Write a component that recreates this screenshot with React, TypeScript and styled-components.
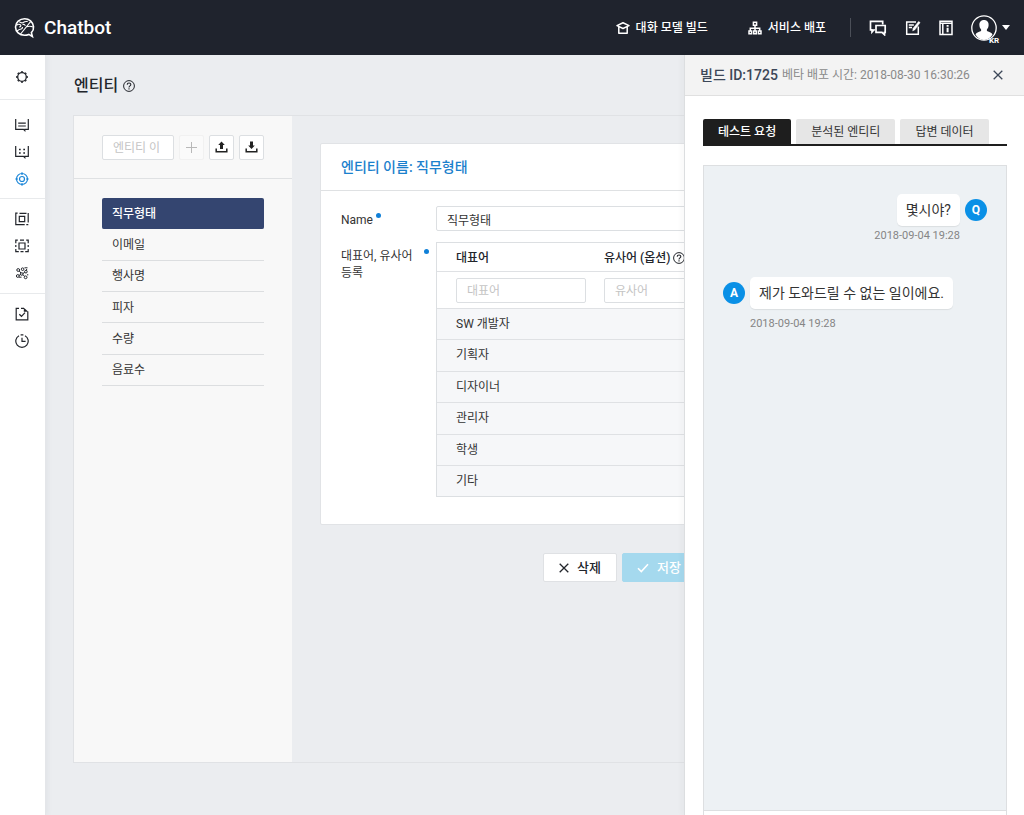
import React from "react";
import styled, { createGlobalStyle, css } from "styled-components";

const GlobalStyle = createGlobalStyle`
  *, *::before, *::after { box-sizing: border-box; }
  body {
    margin: 0;
    background: #ebedf0;
    color: #333;
    font-family: Roboto, "Noto Sans CJK KR", sans-serif;
    font-size: 12px;
    line-height: 17px;
  }
  button, input { font: inherit; color: inherit; margin: 0; }
  h1, h2, ul, p { margin: 0; padding: 0; }
  ul { list-style: none; }
  svg { display: block; }
`;

/* ---------- icons ---------- */

const Stroke = styled.svg.attrs<{ strokeWidth?: string | number }>((p) => ({
  fill: "none",
  stroke: "currentColor",
  strokeWidth: p.strokeWidth ?? 1.4,
  "aria-hidden": true,
}))`
  flex: none;
`;

const LogoIcon = () => (
  <Stroke width="22" height="22" viewBox="0 0 22 22" strokeWidth="1.6">
    <path d="M17.400 15.600c1.600-1.700 2.400-3.700 2.100-6C18.900 5 15.200 1.700 10.600 1.700 5.700 1.700 1.500 5.500 1.500 10.100c0 4.700 4 8.200 9 8.200 1.600 0 3-.3 4.300-.9l3.600 2.100-1-3.900Z" />
    <path d="M6.600 17 16.600 4.600M3 14.200c1.200-1 1.700-1.900 3.300-2 1.600 0 2.200-1 2.200-2.200M2.600 8.300c1.500-1.400 3.100-1.300 3.900-.4.900 1-.1 2.300-1.300 1.900M5.200 4.600c1.800 1.600 3.200 1.500 4.500.6 1.200-.8 2.500-.5 4-.8M8.500 7.600c1.300-.5 2.500 0 2.800 1.300M12.600 9.800c2.400-.8 4.600-.6 6.300.2" strokeWidth="1.100" />
  </Stroke>
);
const CapIcon = () => (
  <Stroke width="14" height="14" viewBox="0 0 14 14" strokeWidth="1.5">
    <path d="M1 4.600 7 1.700l6 2.900L7 7.500 1 4.600ZM2.800 6v6.200h8.400V6" strokeLinejoin="round" />
  </Stroke>
);
const TreeIcon = () => (
  <Stroke width="14" height="14" viewBox="0 0 14 14" strokeWidth="1.5">
    <path d="M5.400 1.200h3.200v3H5.400zM1 10h2.600v2.800H1zM5.700 10h2.600v2.800H5.700zM10.400 10H13v2.800h-2.600zM7 4.200V10M2.300 10V7.200h9.400V10" />
  </Stroke>
);
const TalkIcon = () => (
  <Stroke width="18" height="16" viewBox="0 0 18 16" strokeWidth="1.700">
    <path d="M5.800 9.800H5l-2 2.200V9.800H1.500V1.300h12.200v3.200" />
    <path d="M7 5.500h9.200v6.800h-.7v2.400l-2.500-2.400H7z" />
  </Stroke>
);
const NoteIcon = () => (
  <Stroke width="16" height="16" viewBox="0 0 16 16" strokeWidth="1.500">
    <path d="M11 2H1.700v12.200h11.600V6.500" />
    <path d="M3.800 5h5M3.800 7.500h3.200" />
    <path d="m13.600 1.500 1.500 1.100-5 7-2.400 1.300.5-2.700z" fill="currentColor" strokeWidth=".5" />
  </Stroke>
);
const GuideIcon = () => (
  <Stroke width="14" height="16" viewBox="0 0 14 16" strokeWidth="1.500">
    <path d="M1 1.200h12v13.400H1zM3.800 3v11.600M1 3.300h12" />
    <path d="M8.600 5v1.800M8.600 7.800v4.400" strokeWidth="2" />
  </Stroke>
);
const AvatarIcon = () => (
  <Stroke width="26" height="26" viewBox="0 0 26 26" strokeWidth="1.300">
    <circle cx="13" cy="13" r="12.200" />
    <path d="M13 5c3 0 4.800 2.100 4.600 5.200-.1 1.800-.7 3.200-1.700 4.200v1.700c2.800 1 4.800 1.700 5.600 3.500C19.600 23 16.500 25 13 25s-6.600-2-8.500-5.400c.8-1.800 2.800-2.500 5.600-3.500v-1.700c-1-1-1.600-2.400-1.700-4.200C8.200 7.100 10 5 13 5Z" fill="currentColor" stroke="none" />
  </Stroke>
);
const CaretIcon = () => (
  <svg width="8" height="5" viewBox="0 0 8 5" fill="currentColor" aria-hidden="true"><path d="M0 0h8L4 5z" /></svg>
);
const HelpIcon = () => (
  <Stroke width="12" height="12" viewBox="0 0 12 12" strokeWidth="1">
    <circle cx="6" cy="6" r="5.400" />
    <path d="M4.200 4.800C4.200 2.300 7.800 2.400 7.800 4.600 7.800 5.900 6 5.900 6 7.400M6 8.300v1.200" strokeWidth="1.100" />
  </Stroke>
);
const CloseIcon = () => (
  <Stroke width="10" height="10" viewBox="0 0 10 10" strokeWidth="1.300"><path d="m.7.7 8.600 8.600M9.300.7.7 9.300" /></Stroke>
);
const CheckIcon = () => (
  <Stroke width="12" height="10" viewBox="0 0 12 10" strokeWidth="1.600"><path d="m1 5.200 3.300 3.300L11 1.200" /></Stroke>
);
const PlusIcon = () => (
  <Stroke width="11" height="11" viewBox="0 0 11 11" strokeWidth="1"><path d="M5.500 0v11M0 5.500h11" /></Stroke>
);
const UploadIcon = () => (
  <Stroke width="13" height="12" viewBox="0 0 13 12" strokeWidth="1.500">
    <path d="M1.200 7.500v3.200h10.600V7.500" />
    <path d="M6.500.6 9.800 4H8v4H5V4H3.200z" fill="currentColor" stroke="none" />
  </Stroke>
);
const DownloadIcon = () => (
  <Stroke width="13" height="12" viewBox="0 0 13 12" strokeWidth="1.500">
    <path d="M1.200 7.500v3.200h10.600V7.500" />
    <path d="M6.500 8 9.800 4.600H8v-4H5v4H3.200z" fill="currentColor" stroke="none" />
  </Stroke>
);
const GearIcon = () => (
  <Stroke width="14" height="14" viewBox="0 0 14 14" strokeWidth="1.300">
    <circle cx="7" cy="7" r="4.300" />
    <path d="M7 1.200v1.300M7 11.500v1.300M1.200 7h1.300M11.500 7h1.300M2.900 2.900l.9.900M10.200 10.200l.9.900M11.100 2.900l-.9.900M3.800 10.200l-.9.900" strokeWidth="2" />
  </Stroke>
);
const IntentIcon = () => (
  <Stroke width="14" height="14" viewBox="0 0 14 14" strokeWidth="1.200">
    <path d="M.7 1v10.300h7.800l1.300 1.300v-1.300h3.500V1M3.200 5.200h7.600M3.200 8h7.600" />
  </Stroke>
);
const DialogIcon = () => (
  <Stroke width="14" height="14" viewBox="0 0 14 14" strokeWidth="1.200">
    <path d="M.7 1v10.300h7.800l1.300 1.300v-1.300h3.500V1" />
    <path d="M4 4.500h1.700M8.300 4.500H10M4 8h1.700M8.300 8H10" strokeWidth="1.700" />
  </Stroke>
);
const TargetIcon = () => (
  <Stroke width="14" height="14" viewBox="0 0 14 14" strokeWidth="1.200">
    <circle cx="7" cy="7" r="5.500" />
    <circle cx="7" cy="7" r="2.500" />
    <path d="M7 .3v2.700M7 11v2.700M.3 7H3M11 7h2.700" />
  </Stroke>
);
const FrameIcon = () => (
  <Stroke width="14" height="14" viewBox="0 0 14 14" strokeWidth="1.200">
    <path d="M2.600 1.200H.8v11.500h8.900M4.500 1.300h7M13.200 1v9.500M11.300 12.600h2M4.300 4.300h5.400v5.400H4.300z" />
  </Stroke>
);
const ScanIcon = () => (
  <Stroke width="14" height="14" viewBox="0 0 14 14" strokeWidth="1.200">
    <path d="M2.800 1.200H.8v3M.8 6v2M5 1.200h4M11.200 1.200h2v3M13.200 6v2M.8 10v2.700h3M5.500 12.700h3M10.200 12.700h3V10M4 4h6v6H4z" />
  </Stroke>
);
const LinksIcon = () => (
  <Stroke width="14" height="14" viewBox="0 0 14 14" strokeWidth="1">
    <circle cx="3.200" cy="4" r="1.400" /><circle cx="7.600" cy="3.200" r="1.300" /><circle cx="2.800" cy="10" r="1.400" />
    <circle cx="10.900" cy="5.700" r="1.300" /><circle cx="6.800" cy="8" r="1.300" /><circle cx="10.600" cy="11.300" r="1.400" />
    <path d="M4.300 5 5.900 7M4 9.400l1.600-.8M8 8.800l1.500 1.500M9.800 6.400 8 7.400M9.500 1.800h3M11.600 3v1.400M4 11.200h2.500M12 8.800h1.300" />
  </Stroke>
);
const ReportIcon = () => (
  <Stroke width="14" height="14" viewBox="0 0 14 14" strokeWidth="1.200">
    <path d="M4 1.300H1.200v11.500h11.600V4.500" />
    <path d="M6 1.300h3M4.300 7.200l2.200 2.100 3.500-3.600" />
    <path d="M8.800.7v4h4.600z" fill="currentColor" stroke="none" />
  </Stroke>
);
const ClockIcon = () => (
  <Stroke width="14" height="14" viewBox="0 0 14 14" strokeWidth="1.200">
    <path d="M4 1.700A6.200 6.200 0 1 0 10 1.700M7 3.800v3.600h3.600M5.600.9h2.800" />
  </Stroke>
);

/* ---------- shared parts ---------- */

const bareButton = css`
  display: flex;
  align-items: center;
  justify-content: center;
  padding: 0;
  border: 0;
  background: none;
  cursor: pointer;
`;

const IconButton = styled.button`${bareButton}`;

const TextInput = styled.input`
  height: 25px;
  padding: 1px 10px 0;
  border: 1px solid #dcdfe2;
  border-radius: 2px;
  background: #fff;
  min-width: 0;
  &::placeholder { color: #c4c4c4; opacity: 1; }
`;

/* ---------- page frame ---------- */

const Page = styled.div`
  position: relative;
  display: flex;
  flex-direction: column;
  min-height: 100vh;
  overflow: hidden;
`;

const TopBar = styled.header`
  display: flex;
  align-items: center;
  height: 55px;
  padding: 0 14px;
  background: #1f232d;
  color: #fff;
`;

const Brand = styled.a`
  display: flex;
  align-items: center;
  gap: 8px;
  margin-right: auto;
  color: #fff;
  font-size: 19px;
  font-weight: 500;
  line-height: 24px;
  text-decoration: none;
`;

const TopNav = styled.nav`
  display: flex;
  gap: 40px;
  padding-right: 24px;
  border-right: 1px solid #4b4f58;
`;

const TopLink = styled.a`
  display: flex;
  align-items: center;
  gap: 6px;
  color: #fff;
  font-weight: 500;
  text-decoration: none;
`;

const TopLinkText = styled.span`
  padding-top: 2px;
`;

const TopTools = styled.div`
  display: flex;
  align-items: center;
  gap: 18px;
  padding-left: 18px;
`;

const Account = styled.button`
  ${bareButton}
  position: relative;
  gap: 5px;
`;

const Locale = styled.span`
  position: absolute;
  left: 18px;
  bottom: -4px;
  font-size: 8px;
  font-weight: 700;
  line-height: 8px;
`;

const Body = styled.div`
  display: flex;
  flex: 1;
`;

const SideNav = styled.nav`
  width: 46px;
  flex: none;
  background: #fff;
  border-right: 1px solid #e4e6e9;
  box-shadow: 1px 0 6px rgba(40, 50, 70, 0.06);
`;

const SideGroup = styled.div<{ $top?: number; $bottom?: number }>`
  padding: ${(p) => p.$top ?? 6}px 2px ${(p) => p.$bottom ?? 7}px 0;
  border-bottom: 1px solid #e8eaec;
  &:last-child { border-bottom: 0; }
`;

const SideLink = styled.a<{ $active?: boolean }>`
  display: flex;
  align-items: center;
  justify-content: center;
  height: 27px;
  color: ${(p) => (p.$active ? "#1b86d8" : "#22252b")};
`;

const Main = styled.main`
  display: flex;
  flex: 1;
  flex-direction: column;
  min-width: 0;
  padding: 0 76px 52px 27px;
`;

const PageTitle = styled.h1`
  display: flex;
  align-items: center;
  gap: 5px;
  height: 60px;
  padding: 2px 0 0 1px;
  font-size: 16px;
  font-weight: 500;
  line-height: 24px;
  color: #22252b;
`;

const Workspace = styled.div`
  display: flex;
  flex: 1;
  border: 1px solid #e0e2e5;
`;

/* ---------- entity list ---------- */

const EntityPanel = styled.section`
  width: 218px;
  flex: none;
  background: #f8f8f8;
`;

const EntityTools = styled.form`
  display: flex;
  align-items: center;
  gap: 5px;
  height: 63px;
  padding: 0 28px;
  border-bottom: 1px solid #dfe1e3;
  ${TextInput} { flex: 1; }
`;

const ToolButton = styled.button`
  ${bareButton}
  width: 25px;
  height: 25px;
  flex: none;
  border: 1px solid #dcdfe2;
  border-radius: 2px;
  background: #fff;
  color: #222;
  &:disabled { border-color: #f1f1f1; background: #fafafa; color: #b8b8b8; cursor: default; }
`;

const EntityList = styled.ul`
  display: flex;
  flex-direction: column;
  height: 188px;
  margin: 19px 28px;
`;

const EntityItem = styled.li<{ $active?: boolean }>`
  display: flex;
  flex: 1;
  border-bottom: 1px solid #dcdee0;
  ${(p) => p.$active && css`
    border-color: #344570;
    border-radius: 2px;
    background: #344570;
    color: #fff;
    font-weight: 500;
  `}
`;

const EntityButton = styled.button`
  ${bareButton}
  flex: 1;
  justify-content: flex-start;
  padding: 2px 10px 0;
`;

/* ---------- entity editor ---------- */

const Editor = styled.section`
  flex: 1;
  min-width: 0;
  padding: 27px 28px;
`;

const Card = styled.div`
  border: 1px solid #e1e3e6;
  border-radius: 2px;
  background: #fff;
`;

const CardTitle = styled.h2`
  display: flex;
  align-items: center;
  height: 47px;
  padding: 0 20px;
  border-bottom: 1px solid #dfe1e3;
  color: #1b80cc;
  font-size: 14px;
  font-weight: 500;
`;

const Form = styled.div`
  display: grid;
  grid-template-columns: 95px minmax(0, 1fr);
  row-gap: 11px;
  padding: 15px 20px 27px;
`;

const Label = styled.label`
  display: flex;
  align-items: flex-start;
  gap: 3px;
  padding-top: 6px;
`;

const LabelText = styled.span`
  max-width: 80px;
`;

const Required = styled.span`
  width: 5px;
  height: 5px;
  flex: none;
  margin-top: 1px;
  border-radius: 50%;
  background: #1080d8;
`;

const SynonymTable = styled.table`
  width: 100%;
  height: 255px;
  border: 1px solid #dcdfe2;
  border-collapse: separate;
  border-spacing: 0;
  table-layout: fixed;
  th, td {
    padding: 0 0 0 19px;
    border-bottom: 1px solid #dfe1e4;
    text-align: left;
  }
  th { height: 29px; padding-top: 2px; color: #22252b; font-weight: 500; }
  th:first-child { width: 148px; }
  tbody tr:last-child td { border-bottom: 0; }
`;

const HeadLabel = styled.span`
  display: flex;
  align-items: center;
  gap: 2px;
`;

const EntryRow = styled.tr`
  td { height: 37px; }
  ${TextInput} { display: block; width: 130px; }
`;

const WordRow = styled.tr`
  background: #f6f7f9;
`;

const Actions = styled.div`
  display: flex;
  justify-content: center;
  gap: 5px;
  padding-top: 28px;
`;

const ActionButton = styled.button<{ $primary?: boolean }>`
  ${bareButton}
  gap: 8px;
  width: 74px;
  height: 29px;
  border: 1px solid ${(p) => (p.$primary ? "#a5d9ee" : "#dfe1e4")};
  border-radius: 2px;
  background: ${(p) => (p.$primary ? "#a5d9ee" : "#fff")};
  color: ${(p) => (p.$primary ? "#fff" : "#22252b")};
  font-size: 13px;
  font-weight: 500;
`;

/* ---------- test drawer ---------- */

const Drawer = styled.aside`
  position: absolute;
  top: 55px;
  right: 0;
  bottom: 0;
  display: flex;
  flex-direction: column;
  width: 340px;
  border-left: 1px solid #dcdee0;
  background: #fff;
  box-shadow: -2px 0 6px rgba(40, 50, 40, 0.04);
`;

const DrawerHead = styled.div`
  display: flex;
  align-items: center;
  gap: 4px;
  height: 41px;
  padding: 0 21px 0 15px;
  border-bottom: 1px solid #e0e0e0;
  background: #f3f3f3;
  color: #3c4758;
  button { margin-left: auto; }
`;

const DrawerTitle = styled.h2`
  font-size: 14px;
  font-weight: 500;
`;

const Deployed = styled.span`
  color: #8a8a8a;
`;

const Tabs = styled.div`
  display: flex;
  gap: 5px;
  margin: 23px 17px 0 18px;
  border-bottom: 2px solid #1e1e1e;
`;

const Tab = styled.button<{ $active?: boolean }>`
  ${bareButton}
  height: 25px;
  padding: 2px 15px 0;
  border-radius: 2px 2px 0 0;
  background: ${(p) => (p.$active ? "#1e1e1e" : "#e6e6e6")};
  color: ${(p) => (p.$active ? "#fff" : "#333")};
  font-weight: ${(p) => (p.$active ? 500 : 400)};
`;

const ChatFrame = styled.div`
  display: flex;
  flex: 1;
  flex-direction: column;
  margin: 19px 17px 0 18px;
  border: 1px solid #dddfe1;
  border-bottom: 0;
`;

const ChatLog = styled.div`
  display: flex;
  flex: 1;
  flex-direction: column;
  gap: 31px;
  padding: 28px 19px;
  background: #edf1f4;
`;

const Composer = styled.div`
  height: 5px;
  border-top: 1px solid #dddfe1;
  background: #fff;
`;

const Message = styled.div<{ $mine?: boolean }>`
  display: flex;
  flex-direction: ${(p) => (p.$mine ? "row-reverse" : "row")};
  align-items: flex-start;
  gap: 5px;
`;

const Avatar = styled.span`
  display: flex;
  align-items: center;
  justify-content: center;
  width: 22px;
  height: 22px;
  margin-top: 5px;
  border-radius: 50%;
  background: #0a90e6;
  color: #fff;
  font-weight: 700;
`;

const MessageBody = styled.div<{ $mine?: boolean }>`
  display: flex;
  flex-direction: column;
  align-items: ${(p) => (p.$mine ? "flex-end" : "flex-start")};
  gap: ${(p) => (p.$mine ? 0 : 5)}px;
`;

const Bubble = styled.p`
  padding: 6px 9px;
  border-radius: 5px;
  background: #fff;
  box-shadow: 0 1px 1px rgba(0, 0, 0, 0.08);
  font-size: 14px;
  line-height: 20px;
`;

const Timestamp = styled.time`
  color: #858585;
  font-size: 11px;
  line-height: 20px;
`;

const entities = ["직무형태", "이메일", "행사명", "피자", "수량", "음료수"];
const words = ["SW 개발자", "기획자", "디자이너", "관리자", "학생", "기타"];

export default function App() {
  return (
    <Page>
      <GlobalStyle />
      <TopBar>
        <Brand href="#"><LogoIcon />Chatbot</Brand>
        <TopNav>
          <TopLink href="#build"><CapIcon /><TopLinkText>대화 모델 빌드</TopLinkText></TopLink>
          <TopLink href="#deploy"><TreeIcon /><TopLinkText>서비스 배포</TopLinkText></TopLink>
        </TopNav>
        <TopTools>
          <IconButton aria-label="대화"><TalkIcon /></IconButton>
          <IconButton aria-label="메모"><NoteIcon /></IconButton>
          <IconButton aria-label="가이드"><GuideIcon /></IconButton>
          <Account aria-label="계정"><AvatarIcon /><Locale>KR</Locale><CaretIcon /></Account>
        </TopTools>
      </TopBar>
      <Body>
        <SideNav>
          <SideGroup $top={8} $bottom={9}>
            <SideLink href="#settings" aria-label="설정"><GearIcon /></SideLink>
          </SideGroup>
          <SideGroup $top={11} $bottom={6}>
            <SideLink href="#intent" aria-label="인텐트"><IntentIcon /></SideLink>
            <SideLink href="#dialog" aria-label="대화"><DialogIcon /></SideLink>
            <SideLink href="#entity" aria-label="엔티티" $active><TargetIcon /></SideLink>
          </SideGroup>
          <SideGroup>
            <SideLink href="#frame" aria-label="프레임"><FrameIcon /></SideLink>
            <SideLink href="#scan" aria-label="분석"><ScanIcon /></SideLink>
            <SideLink href="#links" aria-label="연결"><LinksIcon /></SideLink>
          </SideGroup>
          <SideGroup>
            <SideLink href="#report" aria-label="리포트"><ReportIcon /></SideLink>
            <SideLink href="#history" aria-label="이력"><ClockIcon /></SideLink>
          </SideGroup>
        </SideNav>
        <Main>
          <PageTitle>엔티티<HelpIcon /></PageTitle>
          <Workspace>
            <EntityPanel>
              <EntityTools>
                <TextInput aria-label="엔티티 이름" placeholder="엔티티 이" />
                <ToolButton type="button" aria-label="추가" disabled><PlusIcon /></ToolButton>
                <ToolButton type="button" aria-label="업로드"><UploadIcon /></ToolButton>
                <ToolButton type="button" aria-label="다운로드"><DownloadIcon /></ToolButton>
              </EntityTools>
              <EntityList>
                {entities.map((name, i) => (
                  <EntityItem key={name} $active={i === 0}><EntityButton>{name}</EntityButton></EntityItem>
                ))}
              </EntityList>
            </EntityPanel>
            <Editor>
              <Card>
                <CardTitle>엔티티 이름: 직무형태</CardTitle>
                <Form>
                  <Label htmlFor="name"><LabelText>Name</LabelText><Required /></Label>
                  <TextInput id="name" defaultValue="직무형태" />
                  <Label htmlFor="word"><LabelText>대표어, 유사어 등록</LabelText><Required /></Label>
                  <SynonymTable>
                    <thead>
                      <tr>
                        <th scope="col">대표어</th>
                        <th scope="col"><HeadLabel>유사어 (옵션)<HelpIcon /></HeadLabel></th>
                      </tr>
                    </thead>
                    <tbody>
                      <EntryRow>
                        <td><TextInput id="word" placeholder="대표어" /></td>
                        <td><TextInput aria-label="유사어" placeholder="유사어" /></td>
                      </EntryRow>
                      {words.map((word) => (
                        <WordRow key={word}><td>{word}</td><td /></WordRow>
                      ))}
                    </tbody>
                  </SynonymTable>
                </Form>
              </Card>
              <Actions>
                <ActionButton type="button"><CloseIcon />삭제</ActionButton>
                <ActionButton type="button" $primary><CheckIcon />저장</ActionButton>
              </Actions>
            </Editor>
          </Workspace>
        </Main>
      </Body>
      <Drawer>
        <DrawerHead>
          <DrawerTitle>빌드 ID:1725</DrawerTitle>
          <Deployed>베타 배포 시간: 2018-08-30 16:30:26</Deployed>
          <IconButton aria-label="닫기"><CloseIcon /></IconButton>
        </DrawerHead>
        <Tabs role="tablist">
          <Tab role="tab" aria-selected="true" $active>테스트 요청</Tab>
          <Tab role="tab" aria-selected="false">분석된 엔티티</Tab>
          <Tab role="tab" aria-selected="false">답변 데이터</Tab>
        </Tabs>
        <ChatFrame>
          <ChatLog>
            <Message $mine>
              <Avatar>Q</Avatar>
              <MessageBody $mine>
                <Bubble>몇시야?</Bubble>
                <Timestamp>2018-09-04 19:28</Timestamp>
              </MessageBody>
            </Message>
            <Message>
              <Avatar>A</Avatar>
              <MessageBody>
                <Bubble>제가 도와드릴 수 없는 일이에요.</Bubble>
                <Timestamp>2018-09-04 19:28</Timestamp>
              </MessageBody>
            </Message>
          </ChatLog>
          <Composer />
        </ChatFrame>
      </Drawer>
    </Page>
  );
}
